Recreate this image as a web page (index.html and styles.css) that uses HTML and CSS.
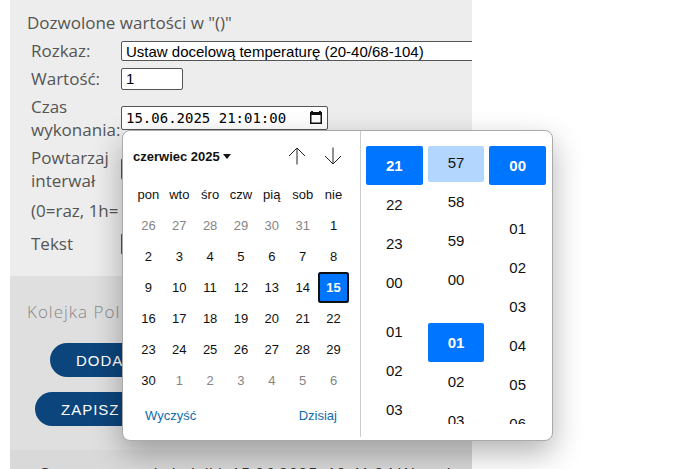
FILE: index.html
```html
<!doctype html>
<html lang="pl">
  <head>
    <meta charset="UTF-8" />
    <meta name="viewport" content="width=device-width, initial-scale=1.0" />
    <title>Kolejka poleceń</title>
    <link rel="stylesheet" href="styles.css">
  </head>
  <body>
    <main class="panel">
      <form class="command">
        <p class="hint">Dozwolone wartości w "()"</p>
        <div class="row">
          <label for="command">Rozkaz:</label>
          <div class="clip">
            <select id="command">
              <option>Ustaw docelową temperaturę (20-40/68-104)</option>
            </select>
          </div>
        </div>
        <div class="row">
          <label for="value">Wartość:</label>
          <input type="text" id="value" class="short" value="1" />
        </div>
        <div class="row">
          <label for="time">Czas wykonania:</label>
          <div class="datetime">
            <input type="text" id="time" value="15.06.2025 21:01:00" />
            <svg class="calendar-icon" viewBox="0 0 14 14" aria-hidden="true">
              <path fill="#111" fill-rule="evenodd" d="M2 0h2v1h6V0h2v1h1v12H1V1h1zM2.500 4v7.500h9V4z" />
            </svg>
            <div class="picker">
              <div class="calendar">
                <div class="calendar-head">
                  <button type="button" class="month">czerwiec 2025 <span class="caret"></span></button>
                  <button type="button" class="arrow" aria-label="Poprzedni miesiąc">
                    <svg viewBox="0 0 18 18"><path d="M9 17.500V1M1 9l8-8 8 8" /></svg>
                  </button>
                  <button type="button" class="arrow" aria-label="Następny miesiąc">
                    <svg viewBox="0 0 18 18"><path d="M9 .5V17M1 9l8 8 8-8" /></svg>
                  </button>
                </div>
                <table class="days">
                  <thead>
                    <tr><th>pon</th><th>wto</th><th>śro</th><th>czw</th><th>pią</th><th>sob</th><th>nie</th></tr>
                  </thead>
                  <tbody>
                    <tr><td class="other">26</td><td class="other">27</td><td class="other">28</td><td class="other">29</td><td class="other">30</td><td class="other">31</td><td>1</td></tr>
                    <tr><td>2</td><td>3</td><td>4</td><td>5</td><td>6</td><td>7</td><td>8</td></tr>
                    <tr><td>9</td><td>10</td><td>11</td><td>12</td><td>13</td><td>14</td><td class="selected">15</td></tr>
                    <tr><td>16</td><td>17</td><td>18</td><td>19</td><td>20</td><td>21</td><td>22</td></tr>
                    <tr><td>23</td><td>24</td><td>25</td><td>26</td><td>27</td><td>28</td><td>29</td></tr>
                    <tr><td>30</td><td class="other">1</td><td class="other">2</td><td class="other">3</td><td class="other">4</td><td class="other">5</td><td class="other">6</td></tr>
                  </tbody>
                </table>
                <div class="calendar-foot">
                  <button type="button">Wyczyść</button>
                  <button type="button">Dzisiaj</button>
                </div>
              </div>
              <div class="clock">
                <ul class="hours">
                  <li class="active">21</li>
                  <li>22</li>
                  <li>23</li>
                  <li>00</li>
                  <li class="wrap">01</li>
                  <li>02</li>
                  <li>03</li>
                </ul>
                <ul>
                  <li class="hover">57</li>
                  <li>58</li>
                  <li>59</li>
                  <li>00</li>
                  <li class="wrap active">01</li>
                  <li>02</li>
                  <li>03</li>
                </ul>
                <ul>
                  <li class="active">00</li>
                  <li class="wrap">01</li>
                  <li>02</li>
                  <li>03</li>
                  <li>04</li>
                  <li>05</li>
                  <li>06</li>
                </ul>
              </div>
            </div>
          </div>
        </div>
        <div class="row">
          <label for="repeat">Powtarzaj interwał</label>
          <input type="text" id="repeat" class="short" />
        </div>
        <p class="note">(0=raz, 1h=</p>
        <div class="row">
          <label for="text">Tekst</label>
          <input type="text" id="text" class="short" />
        </div>
      </form>
      <section class="queue">
        <h2>Kolejka Pol</h2>
        <div class="buttons">
          <button type="button">DODAJ</button>
          <button type="button">ZAPISZ</button>
        </div>
      </section>
      <footer class="status">Czas utworzenia kolejki: 15.06.2025, 19:41:24 Wtorek</footer>
    </main>
  </body>
</html>
```

FILE: styles.css
```css
body {
  height: 100vh;
  margin: 0;
  overflow: hidden;
  font-family: "Open Sans", sans-serif;
  font-size: 17px;
  line-height: 23px;
  color: #555;
  background: #fff;
}
button {
  padding: 0;
  border: none;
  background: none;
  font-family: inherit;
  cursor: pointer;
}
.panel {
  margin: 0 32% 0 10px;
}
.command {
  padding: 11px 0 16px 17px;
  background: #ededed;
}
.hint {
  margin: 0 0 5px;
}
.row {
  display: grid;
  grid-template-columns: 86px 1fr;
  align-items: center;
  gap: 4px;
  margin: 0 0 5px 4px;
}
.clip {
  overflow: hidden;
}
select,
input {
  box-sizing: border-box;
  border: 1px solid #555;
  border-radius: 2px;
  background: #fff;
  color: #000;
  font-family: "Liberation Sans", sans-serif;
  font-size: 15px;
}
select {
  display: block;
  width: 110%;
  height: 20px;
  padding: 0;
}
.short {
  width: 62px;
  height: 22px;
  padding: 0 4px;
}
.datetime {
  position: relative;
  width: 207px;
}
.datetime input {
  display: block;
  width: 100%;
  height: 24px;
  padding: 0 4px;
  font-family: "DejaVu Sans Mono", monospace;
  font-size: 14px;
}
.calendar-icon {
  position: absolute;
  top: 5px;
  right: 5px;
  width: 14px;
  height: 14px;
}
.picker {
  position: absolute;
  z-index: 1;
  top: 100%;
  left: 1px;
  display: flex;
  box-sizing: border-box;
  width: 431px;
  height: 311px;
  border: 1px solid #aaa;
  border-radius: 8px;
  background: #fff;
  color: #111;
  font-family: "Liberation Sans", sans-serif;
  font-size: 13px;
  line-height: 16px;
  box-shadow: 0 12px 30px rgba(0, 0, 0, 0.3);
}
.calendar {
  box-sizing: border-box;
  width: 238px;
  padding: 12px 11px 0 10px;
  margin-bottom: 3px;
  border-right: 1px solid #ccc;
}
.calendar-head {
  display: flex;
  align-items: center;
  gap: 18px;
  height: 26px;
  padding-right: 7px;
}
.month {
  flex: 1;
  color: #111;
  font-size: 13px;
  font-weight: bold;
  text-align: left;
}
.caret {
  display: inline-block;
  border: 4px solid transparent;
  border-top: 5px solid #111;
  border-bottom: 0;
  vertical-align: 2px;
}
.arrow {
  width: 18px;
  height: 18px;
}
.arrow svg {
  display: block;
  fill: none;
  stroke: #222;
}
.days {
  width: 216px;
  margin-top: 10px;
  border-collapse: collapse;
  table-layout: fixed;
}
.days th,
.days td {
  height: 31px;
  padding: 0;
  font-weight: normal;
  text-align: center;
}
.days .other {
  color: #858585;
}
.days .selected {
  border-radius: 3px;
  background: #0075ff;
  box-shadow: inset 0 0 0 2px #111;
  color: #fff;
  font-weight: bold;
}
.calendar-foot {
  display: flex;
  justify-content: space-between;
  padding: 12px 12px 0;
}
.calendar-foot button {
  color: #0f6cac;
  font-size: 13px;
}
.clock {
  display: flex;
  flex: 1;
  gap: 5px;
  height: 278px;
  margin: 15px 6px 0 5px;
  overflow: hidden;
}
.clock ul {
  flex: 1;
  margin: 0;
  padding: 0;
  list-style: none;
}
.clock li {
  height: 39px;
  border-radius: 2px;
  font-size: 15px;
  line-height: 39px;
  text-align: center;
}
.clock .wrap {
  margin-top: 24px;
}
.clock .hours .wrap {
  margin-top: 10px;
}
.clock .active {
  background: #0075ff;
  color: #fff;
  font-weight: bold;
}
.clock .hover {
  height: 36px;
  background: #b3d6ff;
  line-height: 34px;
}
.note {
  margin: 0 0 10px 4px;
  padding-top: 2px;
}
.queue {
  padding: 24px 17px;
  background: #dfdfdf;
}
.queue h2 {
  margin: 0 0 20px;
  color: #888;
  font-size: 17px;
  font-weight: 300;
  letter-spacing: 1px;
}
.buttons {
  display: flex;
  flex-direction: column;
  align-items: flex-start;
  gap: 15px;
  padding-left: 8px;
}
.buttons button {
  height: 34px;
  padding: 0 26px;
  border-radius: 17px;
  background: #0b457b;
  color: #fff;
  font-family: "Liberation Sans", sans-serif;
  font-size: 15px;
  letter-spacing: 1px;
}
.buttons button:first-child {
  margin-left: 15px;
}
.status {
  padding: 12px 28px;
  background: #d9d9d9;
  color: #333;
  white-space: nowrap;
}
```
